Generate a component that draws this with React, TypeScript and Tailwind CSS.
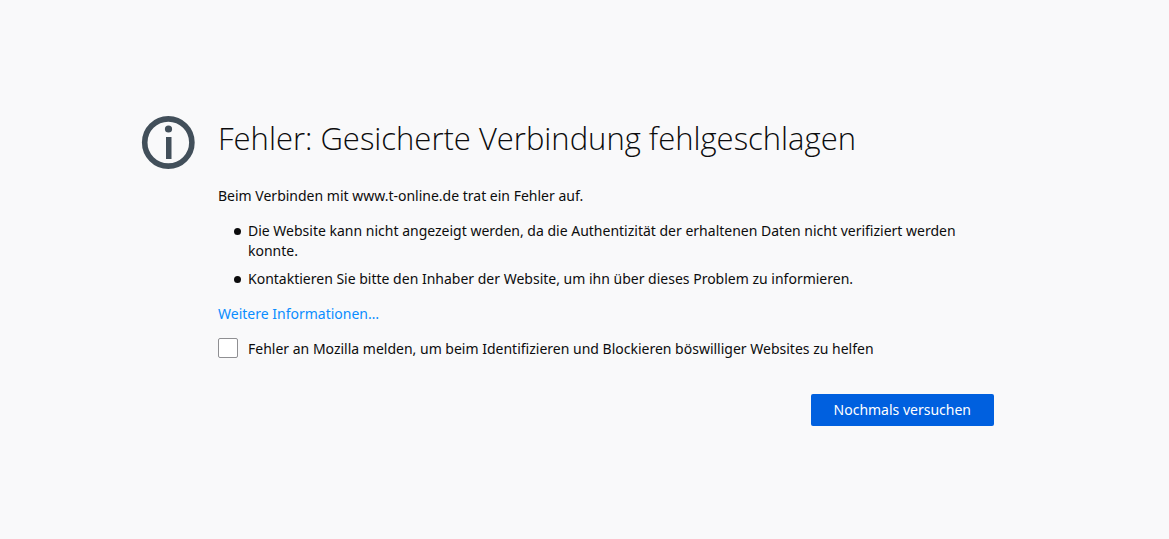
import { useState } from 'react'

const reasons = [
  'Die Website kann nicht angezeigt werden, da die Authentizität der erhaltenen Daten nicht verifiziert werden konnte.',
  'Kontaktieren Sie bitte den Inhaber der Website, um ihn über dieses Problem zu informieren.',
]

function InfoIcon() {
  return (
    <svg viewBox="0 0 54 54" className="mt-0.5 h-[54px] w-[54px] shrink-0" aria-hidden="true">
      <circle cx="27.3" cy="26.5" r="23.6" fill="none" stroke="#424f5a" strokeWidth="5.6" />
      <circle cx="27.5" cy="13" r="3.6" fill="#424f5a" />
      <rect x="25" y="21" width="5.5" height="22" fill="#424f5a" />
    </svg>
  )
}

export default function App() {
  const [report, setReport] = useState(false)

  return (
    <div className="flex min-h-screen items-center justify-center bg-[#f9f9fa] pl-12 pr-[82px] pt-px font-['Noto_Sans',sans-serif] text-sm leading-5 text-[#0c0c0d]">
      <main className="flex w-full max-w-[853px] gap-[23px]">
        <InfoIcon />

        <div className="min-w-0 flex-1">
          <h1 className="font-['Open_Sans',sans-serif] text-[31px] font-light leading-[48px]">
            Fehler: Gesicherte Verbindung fehlgeschlagen
          </h1>

          <p className="mt-6">Beim Verbinden mit www.t-online.de trat ein Fehler auf.</p>

          <ul className="mt-[15px] space-y-2 pl-4">
            {reasons.map(reason => (
              <li
                key={reason}
                className="flex gap-[7px] before:mt-[7px] before:h-[7px] before:w-[7px] before:shrink-0 before:rounded-full before:bg-[#0c0c0d]"
              >
                {reason}
              </li>
            ))}
          </ul>

          <p className="mt-[15px]">
            <a href="#info" className="text-[#0a8dff] hover:underline">Weitere Informationen…</a>
          </p>

          <label className="mt-[14px] flex items-start gap-[10px]">
            <input
              type="checkbox"
              checked={report}
              onChange={e => setReport(e.target.checked)}
              className="h-5 w-5 shrink-0 appearance-none rounded-xs border border-[#8f8f92] bg-white checked:bg-[#0060df]"
            />
            <span className="pt-px">
              Fehler an Mozilla melden, um beim Identifizieren und Blockieren böswilliger Websites zu helfen
            </span>
          </label>

          <div className="mt-[35px] flex justify-end">
            <button
              type="button"
              onClick={() => window.location.reload()}
              className="h-8 rounded-xs bg-[#0060df] px-[23px] text-white hover:bg-[#003eaa]"
            >
              Nochmals versuchen
            </button>
          </div>
        </div>
      </main>
    </div>
  )
}
